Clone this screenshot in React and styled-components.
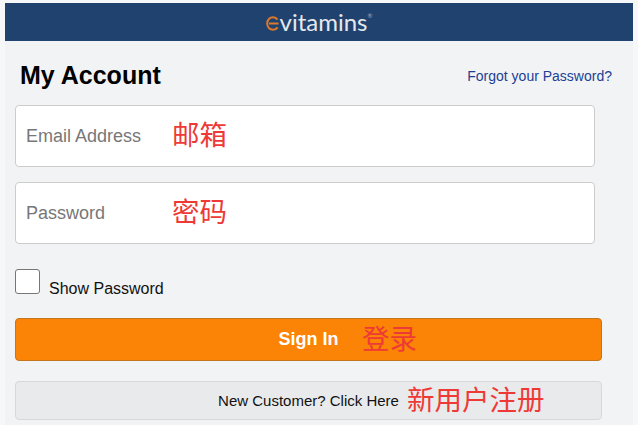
import styled, { createGlobalStyle } from 'styled-components';

const GlobalStyle = createGlobalStyle`
  html, body {
    margin: 0;
    padding: 0;
    height: 100%;
    overflow: hidden;
    background: #f6f7f8;
  }
  * {
    box-sizing: border-box;
  }
`;

const Page = styled.div`
  width: 628px;
  height: 425px;
  margin: 3px 0 0 5px;
  background: #f2f3f4;
  font-family: "Liberation Sans", Arial, sans-serif;
  overflow: hidden;
`;

const Header = styled.header`
  height: 38px;
  background: #1f426f;
  display: flex;
  align-items: center;
  justify-content: center;
`;

const Logo = styled.div`
  display: flex;
  align-items: center;
  color: #e6e8ec;
  font-family: "Lato", sans-serif;
  font-size: 24px;
  line-height: 24px;
`;

const LogoE = styled.svg`
  width: 13px;
  height: 15px;
  margin: 3px 1px 0 0;
  fill: none;
  stroke: #e0782a;
  stroke-width: 2;
`;

const Mark = styled.span`
  font-size: 6px;
  line-height: 6px;
  align-self: flex-start;
  margin: 3px 0 0 0;
  color: #9fb0c4;
`;

const Content = styled.main`
  padding: 0 21px 0 10px;
`;

const TitleRow = styled.div`
  display: flex;
  align-items: center;
  justify-content: space-between;
  height: 64px;
  padding: 5px 0 0 5px;
`;

const Title = styled.h1`
  margin: 0;
  font-size: 25px;
  font-weight: 700;
  color: #000;
`;

const ForgotLink = styled.a`
  font-size: 14px;
  color: #1c3f94;
  text-decoration: none;
`;

const Field = styled.div`
  position: relative;
  width: 580px;
  height: 62px;
  margin-bottom: 15px;
  display: flex;
  align-items: center;
  padding-left: 10px;
  background: #fff;
  border: 1px solid #ccc;
  border-radius: 4px;
  font-size: 18px;
  color: #777;
`;

const Note = styled.span`
  position: absolute;
  left: ${p => p.$left}px;
  top: calc(50% - 2px);
  transform: translateY(-50%);
  color: #ee3a36;
  font-family: "Noto Sans CJK SC", sans-serif;
  font-size: ${p => p.$size || 27.5}px;
  font-weight: 400;
  line-height: 1;
  white-space: nowrap;
`;

const CheckRow = styled.label`
  display: flex;
  align-items: flex-end;
  gap: 9px;
  height: 28px;
  margin: 25px 0 21px;
  font-size: 16px;
  color: #111;
`;

const Box = styled.span`
  width: 25px;
  height: 25px;
  margin-bottom: 3px;
  background: #fff;
  border: 1px solid #767676;
  border-radius: 3px;
`;

const Label = styled.span`
  position: relative;
  top: 1px;
`;

const SignIn = styled.button`
  position: relative;
  display: block;
  width: 587px;
  height: 43px;
  padding: 0 0 1px;
  margin-bottom: 20px;
  background: #fb8305;
  border: 1px solid #c5751c;
  border-radius: 4px;
  color: #fff;
  font-family: inherit;
  font-size: 18px;
  font-weight: 700;
`;

const NewCustomer = styled.button`
  position: relative;
  display: block;
  width: 587px;
  height: 39px;
  padding: 0;
  background: #e9eaec;
  border: 1px solid #d8d8d8;
  border-radius: 4px;
  color: #111;
  font-family: inherit;
  font-size: 15px;
`;

export default function App() {
  return (
    <>
      <GlobalStyle />
      <Page>
        <Header>
          <Logo>
            <LogoE viewBox="0 0 13 15">
              <path d="M11.5 3.6C10.4 2 8.8 1.2 7 1.2 3.8 1.2 1.2 3.9 1.2 7.5S3.8 13.8 7 13.8c1.9 0 3.5-.8 4.6-2.4" />
              <path d="M3 7.5h9.5" />
            </LogoE>
            vitamins<Mark>®</Mark>
          </Logo>
        </Header>
        <Content>
          <TitleRow>
            <Title>My Account</Title>
            <ForgotLink href="#">Forgot your Password?</ForgotLink>
          </TitleRow>
          <Field>
            Email Address
            <Note $left={156}>邮箱</Note>
          </Field>
          <Field>
            Password
            <Note $left={156}>密码</Note>
          </Field>
          <CheckRow>
            <Box />
            <Label>Show Password</Label>
          </CheckRow>
          <SignIn>
            Sign In
            <Note $left={346}>登录</Note>
          </SignIn>
          <NewCustomer>
            New Customer? Click Here
            <Note $left={391}>新用户注册</Note>
          </NewCustomer>
        </Content>
      </Page>
    </>
  );
}
